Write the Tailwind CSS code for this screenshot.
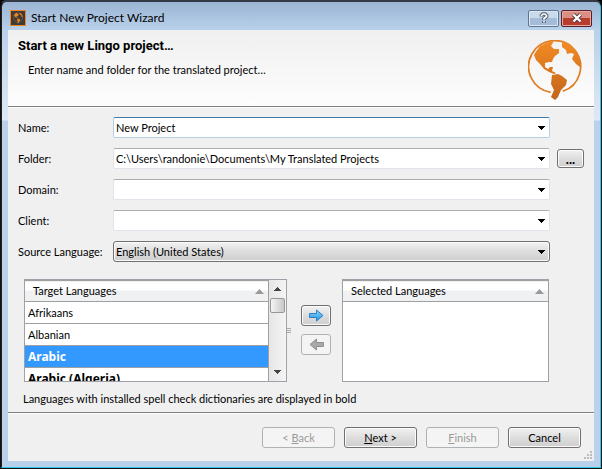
<!DOCTYPE html>
<html lang="en">
<head>
<meta charset="utf-8">
<title>Start New Project Wizard</title>
<script src="https://cdn.jsdelivr.net/npm/@tailwindcss/browser@4"></script>
</head>
<body class="bg-black font-[Lato,sans-serif] text-[11px] leading-4 text-black">
<svg class="absolute size-0" aria-hidden="true">
  <symbol id="globe" viewBox="0 0 54 60">
    <path d="M22.700 52.300A26 26 0 1 1 34.700 51.300" fill="none" stroke="#e07c22" stroke-width="1.700"/>
    <path d="M7 13l5-7 8-4 6-1-3 5 3 3h5v4l-4 3-2 3-1 3h-3l-4 1v4l3 2 2-2h3l-1 4 4 2-2 1-5-2-5-3-4-5-4-4-2-5zM34 1l8 3 7 8 3 8v7l-4-3-4-5 2-5-3-1-4 1-1-4-4-3z"/>
    <path d="M24 35l6-1 4 2 5 4-1 5-5 5-3 7-3 3-4-3 3-7-3-6z"/>
  </symbol>
  <symbol id="down" viewBox="0 0 7 4"><path d="M0 0h7v1H6v1H5v1H4v1H3V3H2V2H1V1H0z"/></symbol>
  <symbol id="up" viewBox="0 0 9 5"><path d="M4.500 0 9 5H0z"/></symbol>
  <linearGradient id="orange" gradientUnits="userSpaceOnUse" x1="0" y1="0" x2="0" y2="60"><stop offset="0" stop-color="#f38c24"/><stop offset="1" stop-color="#c2641a"/></linearGradient>
  <linearGradient id="blue" x1="0" y1="0" x2="0" y2="1"><stop offset="0" stop-color="#8ad4fb"/><stop offset="1" stop-color="#2196e8"/></linearGradient>
</svg>
<div class="flex min-h-screen flex-col rounded-t-md border border-t-2 border-[#111] border-t-[#333a45]">
  <div class="flex grow flex-col rounded-t-[5px] border-r border-b border-l border-[#2cc8e8] border-l-[#222] bg-[linear-gradient(#9ab4d3,#b9d1ea_28px,#dfe9f5_118px,#b9d1ea_119px)] px-1.5 pb-1.5">
    <header class="flex h-7 shrink-0 items-center pt-1 pl-0.5">
      <svg class="size-4 shrink-0" viewBox="0 0 16 16" aria-hidden="true">
        <rect x="0.500" y="0.500" width="15" height="15" fill="#3c3c3c" stroke="#f08421"/>
        <use href="#globe" x="3" y="2.500" width="10" height="11" fill="#f08421"/>
      </svg>
      <h1 class="grow pl-[5px] text-xs">Start New Project Wizard</h1>
      <div class="mr-0.5 flex gap-0.5">
        <button aria-label="Help" class="flex h-[17px] w-[31px] items-center justify-center rounded-xs border border-[#60758e] bg-linear-to-b from-[#c9daec] from-50% to-[#a4bcd7] to-50% shadow-[inset_0_0_0_1px_#dce8f5]">
          <svg class="h-3 w-3" viewBox="0 0 12 12"><path d="M3.500 4.500V3.500l1.500-1.500h2l1.500 1.500v1L6 6.500V8M6 9v2" fill="none" stroke="#4b5769" stroke-width="3.600"/><path d="M3.500 4.200V3.500l1.500-1.500h2l1.500 1.500v1L6 6.500V7.700M6 9v1.500" fill="none" stroke="#fff" stroke-width="1.700"/></svg>
        </button>
        <button aria-label="Close" class="flex h-[17px] w-[31px] items-center justify-center rounded-xs border border-[#5a1f25] bg-linear-to-b from-[#dc8d84] from-50% to-[#b83d2d] to-50% shadow-[inset_0_0_0_1px_#e8aaa0]">
          <svg class="h-2.5 w-3" viewBox="0 0 12 10"><path d="M2.500 1.500l7 7M9.500 1.500l-7 7" stroke="#51383e" stroke-width="4.200"/><path d="M2.500 1.500l7 7M9.500 1.500l-7 7" stroke="#fff" stroke-width="2.400"/></svg>
        </button>
      </div>
    </header>
    <main class="flex grow flex-col bg-[#f0f0f0]">
      <section class="flex h-[77px] justify-between border-b border-[#808080] bg-linear-to-b from-[#f0f0f0] to-[#fdfdfd] pr-3 pl-2.5">
        <div class="pt-2">
          <h2 class="font-[Roboto,sans-serif] text-[13px] leading-4 font-bold">Start a new Lingo project…</h2>
          <p class="pt-2 pl-2.5">Enter name and folder for the translated project…</p>
        </div>
        <svg class="mt-2.5 h-[60px] w-[54px] shrink-0" fill="url(#orange)" aria-hidden="true"><use href="#globe"/></svg>
      </section>
      <form class="grow border-t border-white pt-[9px]">
        <div class="grid grid-cols-[95px_1fr_27px] items-center gap-y-2.5 pr-2.5 pl-2.5">
          <label for="name">Name:</label>
          <div class="mr-[7px] flex h-[21px] items-center rounded-xs border border-[#b5cfe7] border-t-[#3d7bad] bg-white">
            <input id="name" value="New Project" class="min-w-0 grow pl-0.5 outline-none">
            <button type="button" aria-label="Show names" class="px-1"><svg class="h-1 w-[7px]"><use href="#down"/></svg></button>
          </div>
          <span></span>
          <label for="folder">Folder:</label>
          <div class="mr-[7px] flex h-[21px] items-center rounded-xs border border-[#e2e3ea] border-t-[#abadb3] bg-white">
            <input id="folder" value="C:\Users\randonie\Documents\My Translated Projects" class="min-w-0 grow pl-0.5 outline-none">
            <button type="button" aria-label="Show folders" class="px-1"><svg class="h-1 w-[7px]"><use href="#down"/></svg></button>
          </div>
          <button type="button" aria-label="Browse" class="flex h-[19px] items-center justify-center rounded-[3px] border border-[#707070] bg-linear-to-b from-[#f2f2f2] from-0% via-[#dddddd] via-50% to-[#cfcfcf] text-[13px] font-bold shadow-[inset_0_0_0_1px_#fbfbfb]">...</button>
          <label for="domain">Domain:</label>
          <div class="mr-[7px] flex h-[21px] items-center rounded-xs border border-[#e2e3ea] border-t-[#abadb3] bg-white">
            <input id="domain" class="min-w-0 grow pl-0.5 outline-none">
            <button type="button" aria-label="Show domains" class="px-1"><svg class="h-1 w-[7px]"><use href="#down"/></svg></button>
          </div>
          <span></span>
          <label for="client">Client:</label>
          <div class="mr-[7px] flex h-[21px] items-center rounded-xs border border-[#e2e3ea] border-t-[#abadb3] bg-white">
            <input id="client" class="min-w-0 grow pl-0.5 outline-none">
            <button type="button" aria-label="Show clients" class="px-1"><svg class="h-1 w-[7px]"><use href="#down"/></svg></button>
          </div>
          <span></span>
          <label for="source" class="whitespace-nowrap">Source Language:</label>
          <div class="relative mr-[7px]">
            <select id="source" class="block h-[21px] w-full appearance-none rounded-[3px] border border-[#707070] bg-linear-to-b from-[#f2f2f2] from-0% via-[#dddddd] via-50% to-[#cfcfcf] pl-0.5 shadow-[inset_0_0_0_1px_#fbfbfb]"><option>English (United States)</option></select>
            <svg class="pointer-events-none absolute top-[9px] right-[5px] h-1 w-[7px]"><use href="#down"/></svg>
          </div>
        </div>
        <div class="mt-[17px] mr-[45px] ml-4 grid grid-cols-[263fr_55px_207fr]">
          <div class="flex h-[103px] overflow-hidden border border-[#a0a0a8] bg-white">
            <div class="grow overflow-hidden border-r border-[#a0a0a0]">
              <table class="w-full border-collapse text-left">
                <thead><tr class="h-[21px] border-y border-[#a0a0a0] bg-linear-to-b from-white from-40% to-[#f0f1f3] to-50%"><th class="p-0 font-normal"><div class="flex h-5 items-center justify-between pr-1 pl-2">Target Languages<svg class="h-[5px] w-[9px] fill-[#999]"><use href="#up"/></svg></div></th></tr></thead>
                <tbody>
                  <tr class="h-[22px] border-b border-[#a0a0a0]"><td class="py-0 pr-0 pl-[3px]">Afrikaans</td></tr>
                  <tr class="h-[22px] border-b border-[#a0a0a0]"><td class="py-0 pr-0 pl-[3px]">Albanian</td></tr>
                  <tr class="h-[22px] border-b border-[#a0a0a0] bg-[#3399ff] font-['Noto_Sans',sans-serif] text-xs font-bold text-white"><td class="py-0 pr-0 pl-[3px]">Arabic</td></tr>
                  <tr class="h-[22px] font-['Noto_Sans',sans-serif] text-xs font-bold"><td class="py-0 pr-0 pl-[3px]">Arabic (Algeria)</td></tr>
                </tbody>
              </table>
            </div>
            <div class="flex w-[17px] shrink-0 flex-col items-center bg-linear-to-r from-[#e6e6e6] to-[#f4f4f4]" aria-hidden="true">
              <svg class="mt-[7px] h-1 w-[7px] rotate-180 fill-[#444]"><use href="#down"/></svg>
              <div class="mt-[7px] h-[15px] w-[15px] rounded-xs border border-[#979797] bg-linear-to-r from-[#f5f5f5] to-[#c8c8c8]"></div>
              <svg class="mt-auto mb-[7px] h-1 w-[7px] fill-[#444]"><use href="#down"/></svg>
            </div>
          </div>
          <div class="flex">
            <svg class="mt-[49px] h-[5px] w-1 shrink-0" aria-hidden="true"><path d="M0 0h4v1H0zM0 2h4v1H0zM0 4h4v1H0z" fill="#aaa"/></svg>
            <div class="flex flex-col gap-2 pt-[26px] pl-2.5">
              <button type="button" aria-label="Add language" class="flex h-[21px] w-[30px] items-center justify-center rounded-[3px] border border-[#707070] bg-linear-to-b from-[#f2f2f2] from-0% via-[#dddddd] via-50% to-[#cfcfcf] shadow-[inset_0_0_0_1px_#fbfbfb]">
                <svg class="h-[13px] w-[15px]" viewBox="0 0 15 13"><path d="M.5 4.500h7V1l6.500 5.500L7.500 12V8.500h-7z" fill="url(#blue)" stroke="#2b7fc3"/></svg>
              </button>
              <button type="button" disabled aria-label="Remove language" class="flex h-[21px] w-[30px] items-center justify-center rounded-[3px] border border-[#adb2b5] bg-[#f4f4f4]">
                <svg class="h-[13px] w-[15px]" viewBox="0 0 15 13"><path d="M14.500 4.500h-7V1L1 6.500 7.500 12V8.500h7z" fill="#a9a9a9" stroke="#8e8e8e"/></svg>
              </button>
            </div>
          </div>
          <div class="h-[103px] border border-[#a0a0a8] bg-white">
            <table class="w-full border-collapse text-left">
              <thead><tr class="h-[21px] border-y border-[#a0a0a0] bg-linear-to-b from-white from-40% to-[#f0f1f3] to-50%"><th class="p-0 font-normal"><div class="flex h-5 items-center justify-between pr-1 pl-2">Selected Languages<svg class="h-[5px] w-[9px] fill-[#999]"><use href="#up"/></svg></div></th></tr></thead>
            </table>
          </div>
        </div>
        <p class="pt-[9px] pl-[15px]">Languages with installed spell check dictionaries are displayed in bold</p>
      </form>
      <footer class="relative flex h-[49px] shrink-0 justify-end gap-[9px] border-t border-[#808080] pt-3.5 pr-[13px] shadow-[inset_0_1px_0_white]">
        <button disabled class="h-[21px] w-[73px] rounded-[3px] border border-[#adb2b5] bg-[#f4f4f4] text-[#9a9a9a]">&lt; <u>B</u>ack</button>
        <button class="h-[21px] w-[73px] rounded-[3px] border border-[#707070] bg-linear-to-b from-[#f2f2f2] from-0% via-[#dddddd] via-50% to-[#cfcfcf] shadow-[inset_0_0_0_1px_#fbfbfb]"><u>N</u>ext &gt;</button>
        <button disabled class="h-[21px] w-[73px] rounded-[3px] border border-[#adb2b5] bg-[#f4f4f4] text-[#9a9a9a]"><u>F</u>inish</button>
        <button class="h-[21px] w-[73px] rounded-[3px] border border-[#707070] bg-linear-to-b from-[#f2f2f2] from-0% via-[#dddddd] via-50% to-[#cfcfcf] shadow-[inset_0_0_0_1px_#fbfbfb]">Cancel</button>
        <svg class="absolute right-0.5 bottom-0.5 size-2" viewBox="0 0 8 8" aria-hidden="true"><path d="M6 0h2v2H6zM3 3h2v2H3zM6 3h2v2H6zM0 6h2v2H0zM3 6h2v2H3zM6 6h2v2H6z" fill="#bbb"/></svg>
      </footer>
    </main>
  </div>
</div>
</body>
</html>
